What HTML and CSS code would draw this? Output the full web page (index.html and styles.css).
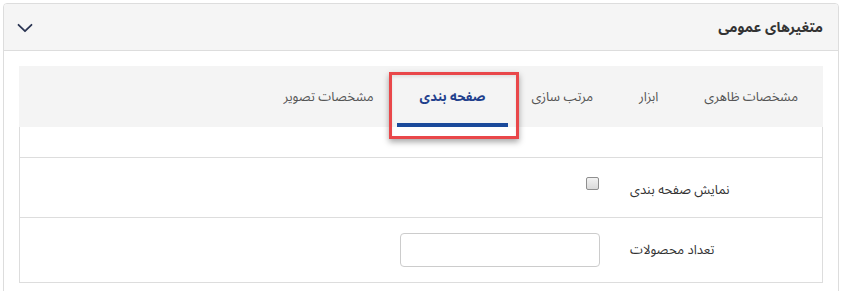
FILE: index.html
```html
<!DOCTYPE html>
<html lang="fa" dir="rtl">
<head>
<meta charset="utf-8">
<title>متغیرهای عمومی</title>
<link rel="stylesheet" href="styles.css">
</head>
<body>
<div class="panel">
  <div class="panel-heading">
    <span class="panel-title">متغیرهای عمومی</span>
    <svg class="chevron" width="16" height="10" viewBox="0 0 16 10" aria-hidden="true">
      <path d="M1.5 1.8 L8 8.2 L14.5 1.8" fill="none" stroke="#2b3553" stroke-width="1.8" stroke-linecap="round" stroke-linejoin="round"/>
    </svg>
  </div>
  <div class="panel-body">
    <div class="tab-box">
      <ul class="tabs">
        <li class="tab">مشخصات ظاهری</li>
        <li class="tab">ابزار</li>
        <li class="tab">مرتب سازی</li>
        <li class="tab active">صفحه بندی<span class="highlight"></span></li>
        <li class="tab">مشخصات تصویر</li>
      </ul>
      <div class="tab-content">
        <div class="spacer"></div>
        <div class="form-row first">
          <div class="label-cell">نمایش صفحه بندی</div>
          <div class="field-cell"><span class="checkbox"></span></div>
        </div>
        <div class="form-row">
          <div class="label-cell">تعداد محصولات</div>
          <div class="field-cell"><input class="text-input" type="text"></div>
        </div>
      </div>
    </div>
  </div>
</div>
</body>
</html>
```
FILE: styles.css
```css
html, body {
  margin: 0;
  padding: 0;
  background: #ffffff;
}
body {
  font-family: Tahoma, "Noto Sans Arabic", "DejaVu Sans", sans-serif;
  font-size: 13px;
  color: #333333;
  padding: 3px 3px 0 3px;
}
.panel {
  border: 1px solid #dddddd;
  border-radius: 4px 4px 0 0;
  min-height: 320px;
  box-sizing: border-box;
}
.panel-heading {
  display: flex;
  justify-content: space-between;
  align-items: center;
  height: 46px;
  padding: 0 15px 0 13px;
  background: #f5f5f5;
  border-bottom: 1px solid #dddddd;
  border-radius: 3px 3px 0 0;
}
.panel-title {
  font-weight: bold;
  font-size: 14px;
  color: #333333;
}
.chevron {
  display: block;
  margin-top: 2px;
}
.panel-body {
  padding: 15px 15px 0 15px;
}
.tabs {
  list-style: none;
  margin: 0;
  padding: 0 2px 0 0;
  height: 61px;
  display: flex;
  background: #f4f4f4;
}
.tab {
  position: relative;
  display: flex;
  align-items: center;
  padding: 0 23px;
  color: #555555;
  white-space: nowrap;
}
.tab.active {
  color: #1f3f8c;
  font-weight: bold;
}
.tab.active::after {
  content: "";
  position: absolute;
  left: 0;
  right: 0;
  bottom: 0;
  height: 4px;
  background: #1b4a9b;
}
.highlight {
  position: absolute;
  top: 6px;
  bottom: -12px;
  left: -8px;
  right: -11px;
  border: 3px solid #e9474a;
  box-shadow: 0 3px 6px rgba(0, 0, 0, 0.35), inset 0 2px 3px rgba(0, 0, 0, 0.08);
  z-index: 2;
}
.tab-content {
  border: 1px solid #dddddd;
  border-top: none;
}
.spacer {
  height: 30px;
}
.form-row {
  display: flex;
  border-top: 1px solid #dddddd;
  padding: 15px 0;
}
.label-cell {
  width: 192px;
  padding: 7px 0 2px 15px;
  line-height: 20px;
  text-align: left;
  color: #333333;
}
.field-cell {
  flex: 1;
  padding-right: 15px;
  display: flex;
  align-items: flex-start;
}
.form-row.first .field-cell {
  padding-top: 4px;
}
.checkbox {
  display: block;
  width: 11px;
  height: 11px;
  margin-right: 1px;
  border: 1px solid #8f8f8f;
  border-radius: 2px;
  background: linear-gradient(#f2f2f2, #dadada);
}
.text-input {
  width: 200px;
  height: 34px;
  box-sizing: border-box;
  border: 1px solid #cccccc;
  border-radius: 4px;
  margin: 0;
  padding: 6px 12px;
  font: inherit;
  background: #ffffff;
}
```
